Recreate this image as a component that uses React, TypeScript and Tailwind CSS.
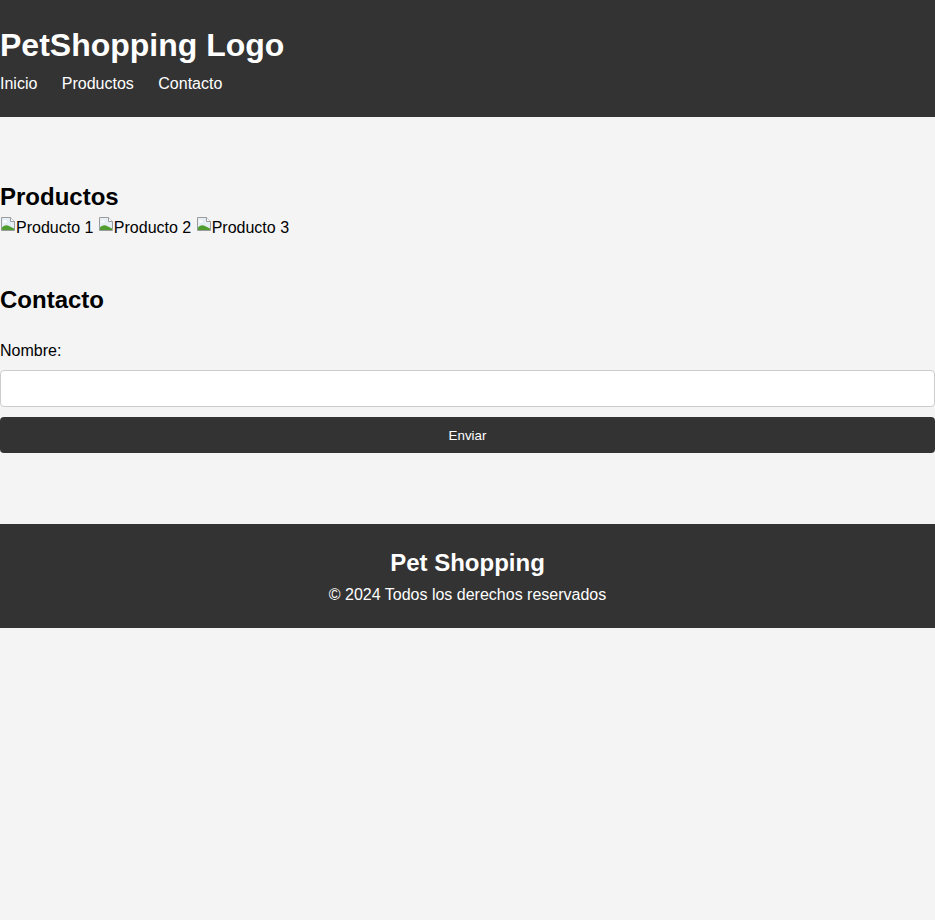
import { useState } from "react";

const products = ["Producto 1", "Producto 2", "Producto 3"];

// icono de imagen rota, como el que pinta el navegador
function BrokenImage() {
  return (
    <svg width="16" height="16" viewBox="0 0 16 16" className="shrink-0 block">
      <path d="M1.5 1.5H10.5L14.5 5.5V14.5H1.5Z" fill="#e6eef6" stroke="#9b9b9b" />
      <path d="M10.5 1.5V5.5H14.5" fill="#ffffff" stroke="#9b9b9b" />
      <ellipse cx="5" cy="5.5" rx="2" ry="1.2" fill="#ffffff" />
      <path d="M2 14V11.5C4 9.5 6.5 8.5 9 10L14 12.5V14Z" fill="#4f9e2f" />
    </svg>
  );
}

export default function App() {
  const [nombre, setNombre] = useState("");

  return (
    <div className="min-h-screen bg-[#f4f4f4] font-['Liberation_Sans',Arial,sans-serif] text-black">
      <header className="bg-[#333333] text-white pt-[27px] pb-[24px]">
        <h1 className="text-[32px] leading-[37px] font-bold">PetShopping Logo</h1>
        <nav className="mt-[11px] flex gap-[24.45px] text-base leading-[18px]">
          <a href="#">Inicio</a>
          <a href="#">Productos</a>
          <a href="#">Contacto</a>
        </nav>
      </header>

      <main className="pt-[66px] pb-[71px]">
        <section>
          <h2 className="text-2xl leading-[27.6px] font-bold">Productos</h2>
          <div className="mt-[5.4px] flex gap-[4.45px] text-base leading-[18px]">
            {products.map((p) => (
              <span key={p} className="flex items-start">
                <BrokenImage />
                <span className="mt-[3.3px]">{p}</span>
              </span>
            ))}
          </div>
        </section>

        <section className="mt-[48.7px]">
          <h2 className="text-2xl leading-[27.6px] font-bold">Contacto</h2>
          <form className="mt-[28.7px]" onSubmit={(e) => e.preventDefault()}>
            <label htmlFor="nombre" className="block text-base leading-[18.4px]">
              Nombre:
            </label>
            <input
              id="nombre"
              value={nombre}
              onChange={(e) => setNombre(e.target.value)}
              className="mt-[9.6px] block w-full h-[37px] bg-white border border-[#cccccc] rounded-[4px] px-2 text-base outline-none"
            />
            <button
              type="submit"
              className="mt-[10px] block w-full h-[36px] pt-[2px] bg-[#333333] text-white text-[13.33px] rounded-[4px]"
            >
              Enviar
            </button>
          </form>
        </section>
      </main>

      <footer className="bg-[#333333] text-white text-center pt-[24.7px] pb-[24px]">
        <h2 className="text-2xl leading-[27.6px] font-bold">Pet Shopping</h2>
        <p className="mt-[9.2px] text-base leading-[18.4px]">© 2024 Todos los derechos reservados</p>
      </footer>
    </div>
  );
}
